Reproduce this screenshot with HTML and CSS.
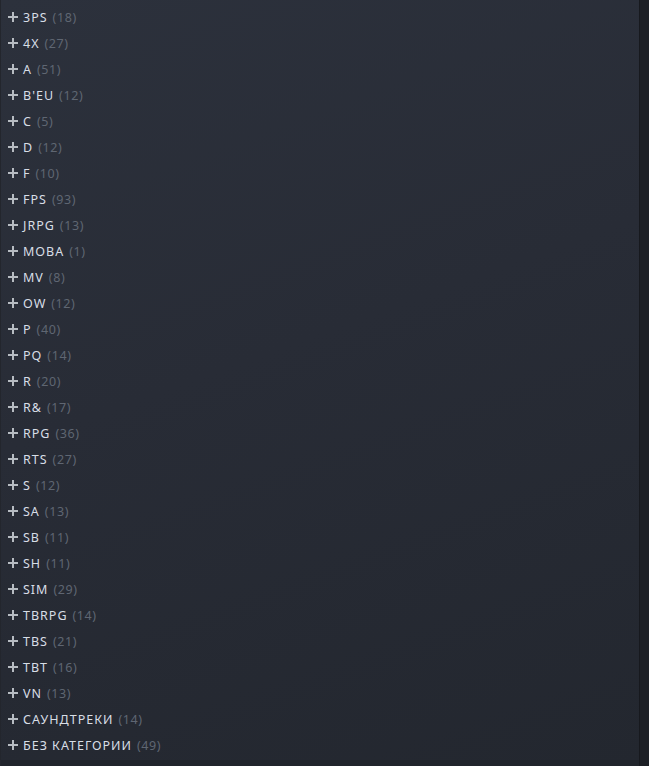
FILE: index.html
```html
<!DOCTYPE html>
<html lang="ru">
  <head>
    <meta charset="UTF-8" />
    <title>Коллекции</title>
    <link rel="stylesheet" href="styles.css">
  </head>
  <body>
    <div class="library">
      <div class="collections">
        <ul class="collection-list" id="list"></ul>
        <div class="collections-foot"></div>
      </div>
      <div class="scroll-rail"></div>
    </div>

    <script>
      const collections = [
        ["3PS", 18], ["4X", 27], ["A", 51], ["B'EU", 12], ["C", 5],
        ["D", 12], ["F", 10], ["FPS", 93], ["JRPG", 13], ["MOBA", 1],
        ["MV", 8], ["OW", 12], ["P", 40], ["PQ", 14], ["R", 20],
        ["R&", 17], ["RPG", 36], ["RTS", 27], ["S", 12], ["SA", 13],
        ["SB", 11], ["SH", 11], ["SIM", 29], ["TBRPG", 14], ["TBS", 21],
        ["TBT", 16], ["VN", 13], ["Саундтреки", 14], ["Без категории", 49]
      ];

      const list = document.getElementById("list");
      const plus =
        '<svg class="plus" width="10" height="10" viewBox="0 0 10 10">' +
        '<path d="M0 4h10v2H0zM4 0h2v10H4z" fill="currentColor"/></svg>';

      collections.forEach(([name, count]) => {
        const li = document.createElement("li");
        li.className = "collection";
        li.innerHTML =
          plus +
          '<span class="name"></span><span class="count">(' + count + ")</span>";
        li.querySelector(".name").textContent = name;
        list.appendChild(li);
      });
    </script>
  </body>
</html>
```

FILE: styles.css
```css
html,
body {
  margin: 0;
  height: 100%;
  background: #1d2026;
}

body {
  font-family: "Noto Sans", "DejaVu Sans", sans-serif;
  overflow: hidden;
}

.library {
  display: flex;
  height: 766px;
}

.collections {
  flex: 1;
  display: flex;
  flex-direction: column;
  background: linear-gradient(160deg, #2c313c 0%, #282c36 45%, #23272f 100%);
  border-left: 1px solid #23262d;
}

.scroll-rail {
  width: 9px;
  background: #1c1f25;
  border-left: 1px solid #17191e;
}

.collection-list {
  list-style: none;
  margin: 0;
  padding: 4px 0 0;
}

.collection {
  display: flex;
  align-items: center;
  height: 26px;
  padding-left: 7px;
  padding-top: 1px;
  box-sizing: border-box;
  font-size: 12.5px;
  letter-spacing: 1px;
  text-transform: uppercase;
}

.plus {
  color: #b7bcc2;
  margin-right: 5px;
  margin-top: -1px;
  flex: none;
}

.name {
  color: #d8dee6;
}

.count {
  color: #5f6672;
  margin-left: 5px;
  letter-spacing: 0.6px;
}

.collections-foot {
  flex: 1;
  background: #20242b;
  margin-top: 2px;
}
```
